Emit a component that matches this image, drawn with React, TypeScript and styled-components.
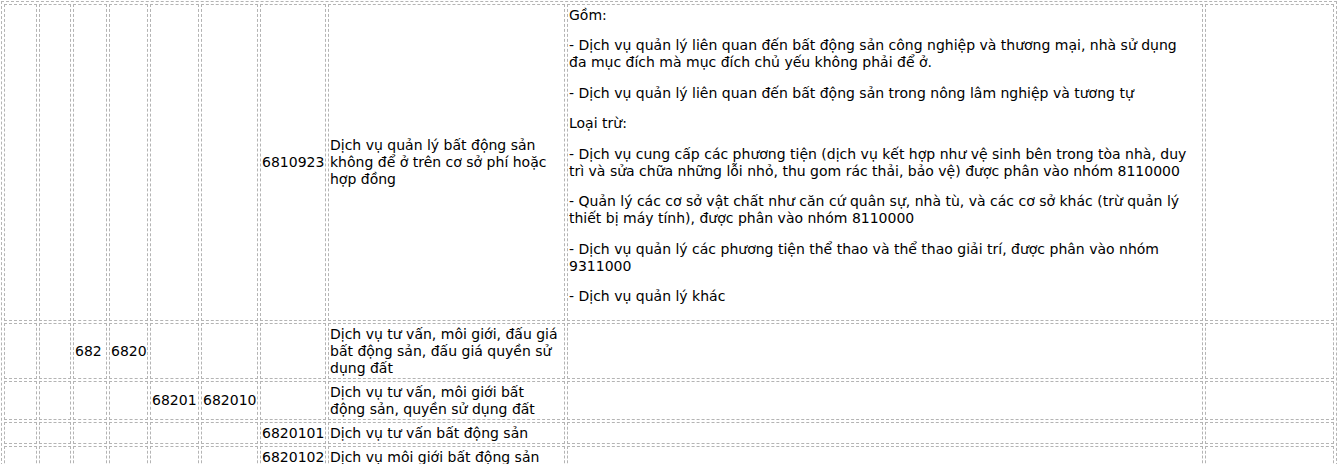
import React from "react";
import styled, { createGlobalStyle } from "styled-components";

const GlobalStyle = createGlobalStyle`
  html, body {
    margin: 0;
    padding: 0;
    background: #fff;
  }
  body {
    font-family: "DejaVu Sans", Verdana, sans-serif;
    font-size: 14px;
    color: #000;
  }
`;

const Table = styled.table`
  margin: 1px 0 0 1px;
  width: 1336px;
  table-layout: fixed;
  border-collapse: separate;
  border-spacing: 2px;
  border: 1px dashed #b4b4b4;
`;

const Col = styled.col<{ $w: number }>`
  width: ${(p) => p.$w}px;
`;

const Cell = styled.td<{ $nowrap?: boolean }>`
  box-sizing: border-box;
  border: 1px dashed #b4b4b4;
  padding: 1.5px 0 1.5px 1px;
  line-height: 17px;
  vertical-align: middle;
  white-space: ${(p) => (p.$nowrap ? "nowrap" : "normal")};
  overflow: hidden;
`;

const Para = styled.p`
  margin: 0 0 13.5px;
`;

const widths = [33, 32, 34, 39, 49, 57, 66, 237, 636, 129];

interface Row {
  codes: string[];
  name: React.ReactNode;
  note?: React.ReactNode;
}

const rows: Row[] = [
  {
    codes: ["", "", "", "", "", "", "6810923"],
    name: (
      <>
        Dịch vụ quản lý bất động sản
        <br />
        không để ở trên cơ sở phí hoặc
        <br />
        hợp đồng
      </>
    ),
    note: (
      <>
        <Para>Gồm:</Para>
        <Para>
          - Dịch vụ quản lý liên quan đến bất động sản công nghiệp và thương mại, nhà sử dụng
          <br />
          đa mục đích mà mục đích chủ yếu không phải để ở.
        </Para>
        <Para>- Dịch vụ quản lý liên quan đến bất động sản trong nông lâm nghiệp và tương tự</Para>
        <Para>Loại trừ:</Para>
        <Para>
          - Dịch vụ cung cấp các phương tiện (dịch vụ kết hợp như vệ sinh bên trong tòa nhà, duy
          <br />
          trì và sửa chữa những lỗi nhỏ, thu gom rác thải, bảo vệ) được phân vào nhóm 8110000
        </Para>
        <Para>
          - Quản lý các cơ sở vật chất như căn cứ quân sự, nhà tù, và các cơ sở khác (trừ quản lý
          <br />
          thiết bị máy tính), được phân vào nhóm 8110000
        </Para>
        <Para>
          - Dịch vụ quản lý các phương tiện thể thao và thể thao giải trí, được phân vào nhóm
          <br />
          9311000
        </Para>
        <Para>- Dịch vụ quản lý khác</Para>
      </>
    ),
  },
  {
    codes: ["", "", "682", "6820", "", "", ""],
    name: (
      <>
        Dịch vụ tư vấn, môi giới, đấu giá
        <br />
        bất động sản, đấu giá quyền sử
        <br />
        dụng đất
      </>
    ),
  },
  {
    codes: ["", "", "", "", "68201", "682010", ""],
    name: (
      <>
        Dịch vụ tư vấn, môi giới bất
        <br />
        động sản, quyền sử dụng đất
      </>
    ),
  },
  {
    codes: ["", "", "", "", "", "", "6820101"],
    name: "Dịch vụ tư vấn bất động sản",
  },
  {
    codes: ["", "", "", "", "", "", "6820102"],
    name: "Dịch vụ môi giới bất động sản",
  },
];

const App: React.FC = () => {
  return (
    <>
      <GlobalStyle />
      <Table>
        <colgroup>
          {widths.map((w, i) => (
            <Col key={i} $w={w} />
          ))}
        </colgroup>
        <tbody>
          {rows.map((row, r) => (
            <tr key={r}>
              {row.codes.map((c, i) => (
                <Cell key={i} $nowrap>
                  {c}
                </Cell>
              ))}
              <Cell>{row.name}</Cell>
              <Cell>{row.note}</Cell>
              <Cell />
            </tr>
          ))}
        </tbody>
      </Table>
    </>
  );
};

export default App;
